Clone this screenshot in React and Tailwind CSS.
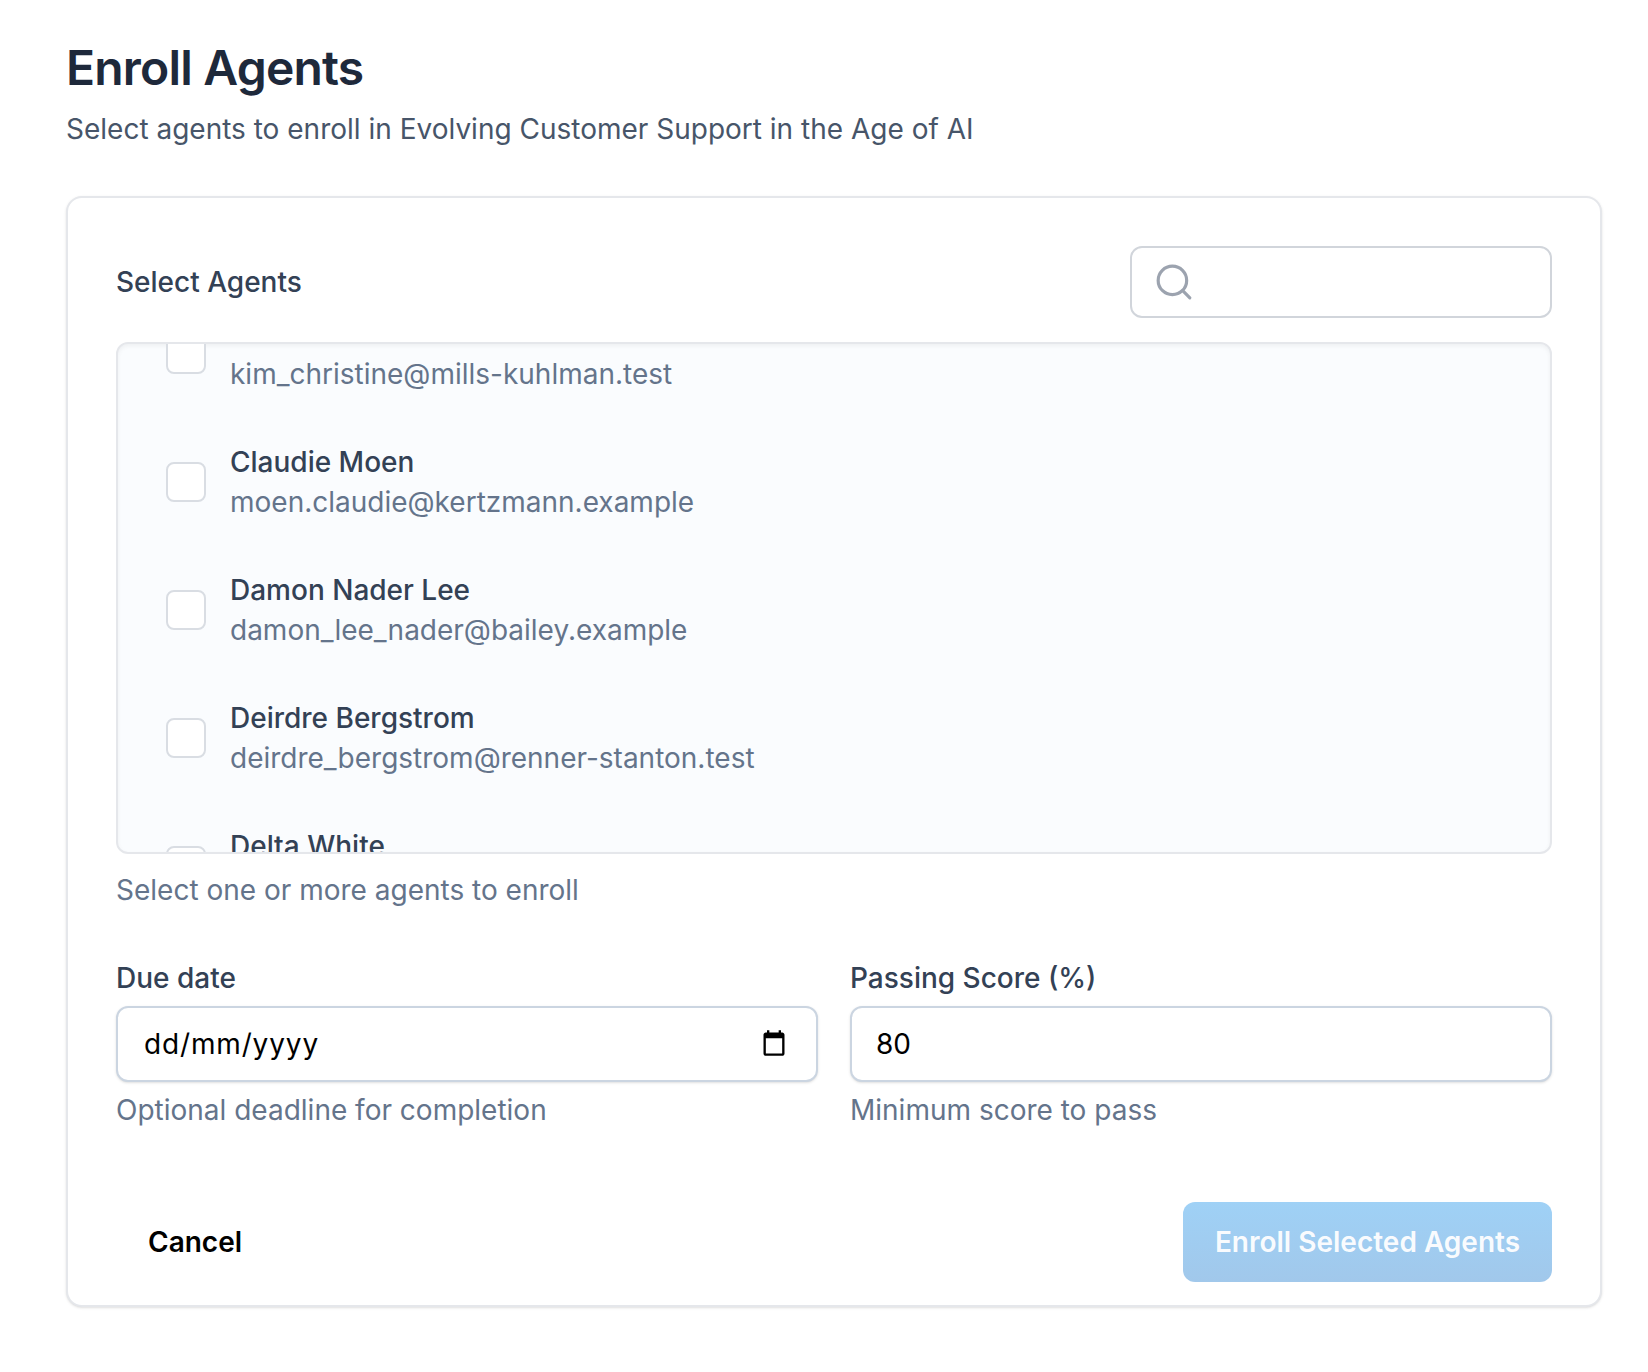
import React from "react";

const agents = [
  { name: "Kim Christine", email: "kim_christine@mills-kuhlman.test" },
  { name: "Claudie Moen", email: "moen.claudie@kertzmann.example" },
  { name: "Damon Nader Lee", email: "damon_lee_nader@bailey.example" },
  { name: "Deirdre Bergstrom", email: "deirdre_bergstrom@renner-stanton.test" },
  { name: "Delta White", email: "delta.white@example.test" },
];

const AgentRow = ({ agent }) => {
  return (
    <div className="flex h-[128px] items-center pl-[48px]">
      <div className="h-[40px] w-[40px] shrink-0 rounded-[8px] border-2 border-[#d9dde3] bg-white"></div>
      <div className="ml-[24px]">
        <div className="text-[28px] leading-[40px] font-medium text-[#334155]">{agent.name}</div>
        <div className="text-[28px] leading-[40px] text-[#64748b]">{agent.email}</div>
      </div>
    </div>
  );
};

function App() {
  return (
    <div className="min-h-[1372px] bg-white px-[66px] pt-[38px] font-['Inter',sans-serif]">
      <h1 className="text-[48px] leading-[60px] font-semibold tracking-[-0.8px] text-[#1e293b]">Enroll Agents</h1>
      <p className="mt-[11px] text-[28px] leading-[40px] text-[#475569]">
        Select agents to enroll in Evolving Customer Support in the Age of AI
      </p>

      <div className="mt-[47px] h-[1111px] w-[1536px] rounded-[16px] border-2 border-[#e5e7eb] bg-white px-[48px] pt-[48px] shadow">
        <div className="flex items-center justify-between">
          <div className="text-[28px] leading-[40px] font-medium text-[#334155]">Select Agents</div>
          <div className="flex h-[72px] w-[422px] items-center rounded-[12px] border-2 border-[#d1d5db] bg-white pl-[23px]">
            <svg width="38" height="38" viewBox="0 0 24 24" fill="none" stroke="#9ca3af" strokeWidth="2" strokeLinecap="round">
              <circle cx="11" cy="11" r="9" />
              <path d="M17.5 17.5L22 22" />
            </svg>
            <input readOnly className="ml-[12px] h-full min-w-0 flex-1 rounded-[12px] outline-none" />
          </div>
        </div>

        <div className="mt-[24px] h-[512px] overflow-hidden rounded-[12px] border-2 border-[#e5e7eb] bg-[#fafcfe] shadow-inner">
          <div className="-mt-[54px]">
            {agents.map((agent) => (
              <AgentRow key={agent.name} agent={agent} />
            ))}
          </div>
        </div>
        <p className="mt-[16px] text-[28px] leading-[40px] text-[#64748b]">Select one or more agents to enroll</p>

        <div className="mt-[48px] grid grid-cols-2 gap-[32px]">
          <div>
            <label className="block text-[28px] leading-[40px] font-medium text-[#334155]">Due date</label>
            <div className="mt-[8px] flex h-[76px] items-center justify-between rounded-[12px] border-2 border-[#cbd5e1] bg-white pr-[28px] pl-[26px] shadow-sm">
              <span className="text-[28px] tracking-[0.85px] text-black">dd/mm/yyyy</span>
              <svg width="28" height="28" viewBox="0 0 24 24" fill="black" className="-mt-[2px]">
                <path d="M19 3h-1V1h-2v2H8V1H6v2H5c-1.1 0-2 .9-2 2v16c0 1.1.9 2 2 2h14c1.1 0 2-.9 2-2V5c0-1.1-.9-2-2-2zm0 18H5V8h14v13z" />
              </svg>
            </div>
            <p className="mt-[8px] text-[28px] leading-[40px] text-[#64748b]">Optional deadline for completion</p>
          </div>
          <div>
            <label className="block text-[28px] leading-[40px] font-medium text-[#334155]">Passing Score (%)</label>
            <input
              readOnly
              value="80"
              className="mt-[8px] h-[76px] w-full rounded-[12px] border-2 border-[#cbd5e1] bg-white px-[24px] text-[28px] text-black shadow-sm outline-none"
            />
            <p className="mt-[8px] text-[28px] leading-[40px] text-[#64748b]">Minimum score to pass</p>
          </div>
        </div>

        <div className="mt-[72px] flex items-center justify-between">
          <button className="px-[32px] text-[28px] font-semibold text-black">Cancel</button>
          <button className="h-[80px] w-[369px] rounded-[12px] bg-gradient-to-b from-[#9fd1f6] to-[#a1c8eb] text-[28px] font-semibold text-white/95">
            Enroll Selected Agents
          </button>
        </div>
      </div>
    </div>
  );
}

export default App;
